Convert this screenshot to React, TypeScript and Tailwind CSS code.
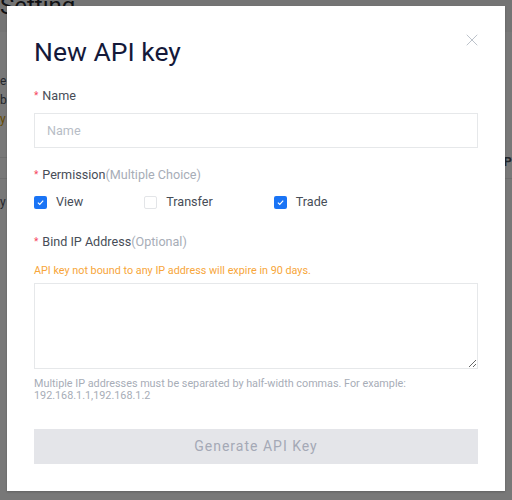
import { X } from 'lucide-react';

function Check({ checked }: { checked: boolean }) {
    if (!checked) {
        return <span className="block h-[13px] w-[13px] rounded-[2px] border border-[#e3e5e8] bg-white" />;
    }
    return (
        <span className="flex h-[13px] w-[13px] items-center justify-center rounded-[2px] bg-[#1a74f5]">
            <svg viewBox="0 0 12 12" className="h-[9px] w-[9px]" fill="none" stroke="white" strokeWidth="1.6">
                <path d="M2.5 6.2 5 8.5 9.6 3.6" />
            </svg>
        </span>
    );
}

function Label({ text, hint }: { text: string; hint?: string }) {
    return (
        <div className="flex items-center text-[12.6px] leading-[16px] text-[#474d57]">
            <span className="mr-[4px] text-[10px] text-[#f6465d]">*</span>
            <span>{text}</span>
            {hint && <span className="text-[#a7adb7]">{hint}</span>}
        </div>
    );
}

export default function App() {
    const perms = [
        { name: 'View', checked: true },
        { name: 'Transfer', checked: false },
        { name: 'Trade', checked: true },
    ];

    return (
        <div className="relative h-[500px] w-[512px] overflow-hidden bg-[#f0f0f0] font-['Roboto',sans-serif]">
            {/* page behind the dialog */}
            <div className="absolute inset-0">
                <div className="h-[40px] bg-[#e8e8e8]">
                    <span className="-mt-[8px] block text-[24px] leading-[28px] text-[#1e2329]">Setting</span>
                </div>
                <div className="pt-[40px] text-[12px] leading-[19px] text-[#474d57]">
                    <p>e f</p>
                    <p>ba</p>
                    <p className="text-[#c99400]">y</p>
                </div>
                <div className="mt-[28px] h-[22px] border-y border-[#dcdcdc]" />
                <p className="pt-[14px] text-[12px] text-[#474d57]">y</p>
                <p className="absolute right-0 top-[152px] text-[13px] font-bold text-[#474d57]">P</p>
            </div>
            <div className="absolute inset-0 bg-black/50" />

            <div className="absolute left-[7px] top-[6px] h-[485px] w-[498px] bg-white px-[27px] pt-[31px] shadow-[0_1px_2px_rgba(0,0,0,0.2)]">
                <button className="absolute right-[23px] top-[24px] text-[#b7bdc6]">
                    <X size={20} strokeWidth={1.1} />
                </button>

                <h1 className="text-[26.5px] leading-[30px] text-[#14193a]">New API key</h1>

                <div className="mt-[21px]">
                    <Label text="Name" />
                    <input
                        className="mt-[9px] block h-[35px] w-full border border-[#e6e8ea] px-[12px] text-[12.6px] text-[#474d57] outline-none placeholder:text-[#b7bdc6]"
                        placeholder="Name"
                    />
                </div>

                <div className="mt-[19px]">
                    <Label text="Permission" hint="(Multiple Choice)" />
                    <div className="mt-[11px] flex items-center gap-[61px]">
                        {perms.map((p) => (
                            <label key={p.name} className="flex items-center gap-[9px] text-[12.6px] leading-[16px] text-[#474d57]">
                                <Check checked={p.checked} />
                                <span>{p.name}</span>
                            </label>
                        ))}
                    </div>
                </div>

                <div className="mt-[24px]">
                    <Label text="Bind IP Address" hint="(Optional)" />
                    <p className="mt-[14px] text-[10.8px] leading-[13px] text-[#f7a63a]">
                        API key not bound to any IP address will expire in 90 days.
                    </p>
                    <textarea className="mt-[6px] block h-[86px] w-full border border-[#e6e8ea] p-[8px] text-[13px] outline-none" />
                    <p className="mt-[9px] text-[10.8px] leading-[11.5px] text-[#a7adb7]">
                        Multiple IP addresses must be separated by half-width commas. For example:
                        <br />
                        192.168.1.1,192.168.1.2
                    </p>
                </div>

                <button className="mt-[28px] flex h-[35px] w-full items-center justify-center bg-[#e4e5e9] text-[14px] tracking-[1px] text-[#a4a9b6]">
                    Generate API Key
                </button>
            </div>
        </div>
    );
}
